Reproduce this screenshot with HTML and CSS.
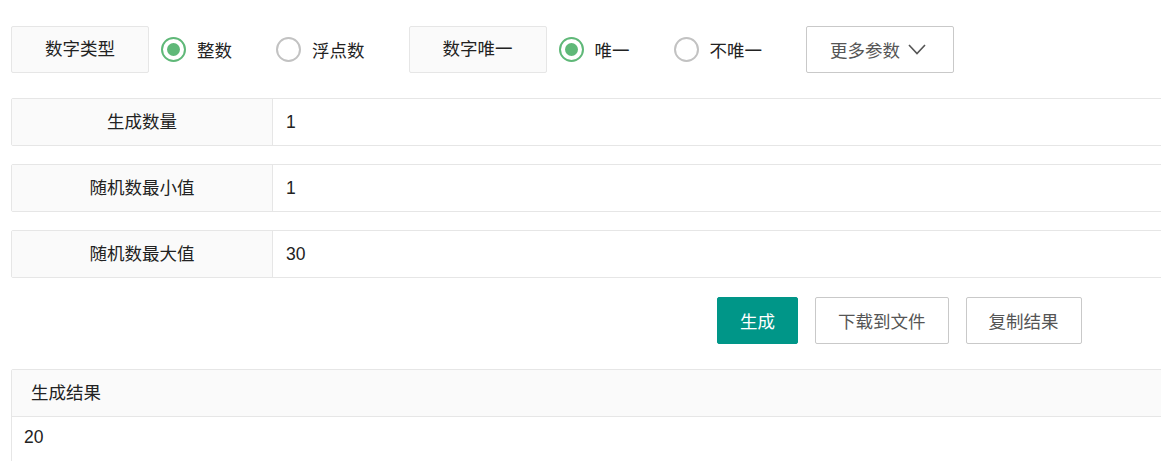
FILE: index.html
```html
<!DOCTYPE html>
<html lang="zh-CN">
<head>
  <meta charset="UTF-8" />
  <meta name="viewport" content="width=device-width, initial-scale=1.0" />
  <title>随机数生成</title>
  <link rel="stylesheet" href="styles.css">
</head>
<body>
  <div class="page">
    <!-- 类型 / 唯一 -->
    <div class="option-row">
      <div class="option-label">数字类型</div>
      <div class="radio checked"><span class="radio-icon"></span>整数</div>
      <div class="radio"><span class="radio-icon"></span>浮点数</div>
      <div class="option-label">数字唯一</div>
      <div class="radio checked"><span class="radio-icon"></span>唯一</div>
      <div class="radio"><span class="radio-icon"></span>不唯一</div>
      <button class="btn btn-more">更多参数
        <svg width="18" height="11" viewBox="0 0 18 11"><polyline points="1,1 9,9.5 17,1" fill="none" stroke="#555" stroke-width="1.6"/></svg>
      </button>
    </div>

    <div class="form-item">
      <label class="form-label">生成数量</label>
      <input class="form-input" type="text" value="1">
    </div>
    <div class="form-item">
      <label class="form-label">随机数最小值</label>
      <input class="form-input" type="text" value="1">
    </div>
    <div class="form-item">
      <label class="form-label">随机数最大值</label>
      <input class="form-input" type="text" value="30">
    </div>

    <div class="actions">
      <button class="btn btn-primary">生成</button>
      <button class="btn">下载到文件</button>
      <button class="btn">复制结果</button>
    </div>

    <div class="card">
      <div class="card-header">生成结果</div>
      <div class="card-body">20</div>
    </div>
  </div>
</body>
</html>
```

FILE: styles.css
```css
body {
  margin: 0;
  font-family: "Liberation Sans", "Noto Sans CJK SC", sans-serif;
  font-size: 17.5px;
  color: #222;
  overflow: hidden;
}
.page {
  width: 1400px;
  padding: 26px 0 0 11px;
}
.option-row {
  display: flex;
  align-items: center;
  height: 47px;
}
.option-label {
  box-sizing: border-box;
  width: 138px;
  height: 47px;
  line-height: 45px;
  text-align: center;
  background: #fafafa;
  border: 1px solid #e6e6e6;
  border-radius: 2px;
  margin-right: 12px;
}
.radio {
  display: flex;
  align-items: center;
  gap: 11px;
  margin-right: 44px;
}
.radio-icon {
  box-sizing: border-box;
  width: 25px;
  height: 25px;
  border: 2px solid #c2c2c2;
  border-radius: 50%;
  display: flex;
  align-items: center;
  justify-content: center;
}
.radio.checked .radio-icon {
  border-color: #5fb878;
}
.radio.checked .radio-icon::after {
  content: "";
  width: 13px;
  height: 13px;
  border-radius: 50%;
  background: #5fb878;
}
.btn {
  box-sizing: border-box;
  height: 47px;
  padding: 0 22px;
  font-family: inherit;
  font-size: 17.5px;
  color: #555;
  background: #fff;
  border: 1px solid #c9c9c9;
  border-radius: 2px;
  cursor: pointer;
}
.btn-more {
  display: flex;
  align-items: center;
  gap: 8px;
  padding: 0 27px 0 23px;
}
.btn-primary {
  color: #fff;
  background: #009688;
  border-color: #009688;
}
.form-item {
  display: flex;
  box-sizing: border-box;
  height: 48px;
  margin-top: 18px;
  border: 1px solid #e6e6e6;
  border-radius: 2px;
}
.option-row + .form-item {
  margin-top: 25px;
}
.form-label {
  box-sizing: border-box;
  width: 261px;
  line-height: 46px;
  text-align: center;
  background: #fafafa;
  border-right: 1px solid #e6e6e6;
}
.form-input {
  flex: 1;
  border: none;
  outline: none;
  padding: 0 13px;
  font-family: inherit;
  font-size: 17.5px;
  color: #222;
}
.actions {
  display: flex;
  gap: 17px;
  margin-top: 19px;
  padding-left: 706px;
}
.card {
  margin-top: 25px;
  border: 1px solid #e6e6e6;
  border-radius: 2px;
  height: 200px;
}
.card-header {
  height: 46px;
  line-height: 46px;
  padding-left: 19px;
  background: #fafafa;
  border-bottom: 1px solid #e6e6e6;
}
.card-body {
  padding: 6px 12px;
  line-height: 28px;
}
```
